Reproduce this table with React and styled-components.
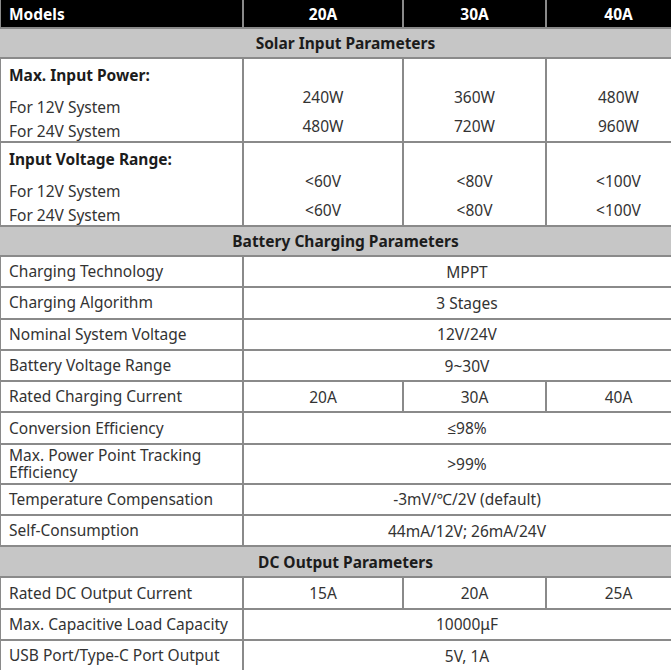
import styled, { createGlobalStyle } from 'styled-components';

const GlobalStyle = createGlobalStyle`
  html, body {
    margin: 0;
    padding: 0;
    background: #ffffff;
    overflow: hidden;
  }
  body {
    font-family: "Noto Sans", "Open Sans", Arial, sans-serif;
  }
`;

const Table = styled.table`
  border-collapse: collapse;
  table-layout: fixed;
  width: 691px;
  margin-left: -1px;
  font-size: 15.5px;
  color: #333333;
`;

const HeadCell = styled.th`
  background: #000000;
  color: #ffffff;
  font-weight: 700;
  font-size: 15.5px;
  height: 27px;
  padding: 0 8px;
  text-align: ${p => (p.left ? 'left' : 'center')};
  border: 2px solid #8a8a8a;
  border-top: none;
  border-bottom: none;
`;

const SectionCell = styled.td`
  background: #c6c6c6;
  color: #1c1c1c;
  font-weight: 700;
  text-align: center;
  height: ${p => p.h || 28}px;
  padding: 0;
  border: 2px solid #8a8a8a;
  border-left: none;
  border-right: none;
`;

const Label = styled.td`
  text-align: left;
  padding: 0 8px;
  height: ${p => p.h || 29.3}px;
  line-height: 17px;
  border: 2px solid #8a8a8a;
  vertical-align: middle;
`;

const Value = styled.td`
  text-align: center;
  padding: 0 6px;
  border: 2px solid #8a8a8a;
  vertical-align: middle;
`;

const GroupLabel = styled.td`
  text-align: left;
  padding: 5px 8px 0;
  height: 77px;
  border: 2px solid #8a8a8a;
  vertical-align: top;
`;

const GroupTitle = styled.div`
  font-weight: 700;
  color: #1c1c1c;
  line-height: 22px;
`;

const GroupLine = styled.div`
  line-height: ${p => p.lh}px;
  margin-top: ${p => p.mt || 0}px;
`;

const GroupValue = styled.td`
  text-align: center;
  border: 2px solid #8a8a8a;
  vertical-align: top;
  padding: 24px 0 0;
  line-height: 29px;
`;

const groups = [
  {
    title: 'Max. Input Power:',
    values: [['240W', '480W'], ['360W', '720W'], ['480W', '960W']],
  },
  {
    title: 'Input Voltage Range:',
    values: [['<60V', '<60V'], ['<80V', '<80V'], ['<100V', '<100V']],
  },
];

const battery = [
  ['Charging Technology', 'MPPT'],
  ['Charging Algorithm', '3 Stages'],
  ['Nominal System Voltage', '12V/24V'],
  ['Battery Voltage Range', '9~30V'],
  ['Rated Charging Current', ['20A', '30A', '40A']],
  ['Conversion Efficiency', '≤98%'],
  ['Max. Power Point Tracking Efficiency', '>99%', 38],
  ['Temperature Compensation', '-3mV/℃/2V (default)'],
  ['Self-Consumption', '44mA/12V; 26mA/24V'],
];

const output = [
  ['Rated DC Output Current', ['15A', '20A', '25A']],
  ['Max. Capacitive Load Capacity', '10000μF'],
  ['USB Port/Type-C Port Output', '5V, 1A'],
];

const SpecRow = ({ label, value, h }) => (
  <tr>
    <Label h={h}>{label}</Label>
    {Array.isArray(value) ? (
      value.map(v => <Value key={v}>{v}</Value>)
    ) : (
      <Value colSpan={3}>{value}</Value>
    )}
  </tr>
);

const App = () => (
  <>
    <GlobalStyle />
    <Table>
      <colgroup>
        <col style={{ width: 243 }} />
        <col style={{ width: 160 }} />
        <col style={{ width: 143 }} />
        <col style={{ width: 145 }} />
      </colgroup>
      <thead>
        <tr>
          <HeadCell left>Models</HeadCell>
          <HeadCell>20A</HeadCell>
          <HeadCell>30A</HeadCell>
          <HeadCell>40A</HeadCell>
        </tr>
      </thead>
      <tbody>
        <tr>
          <SectionCell colSpan={4}>Solar Input Parameters</SectionCell>
        </tr>
        {groups.map(g => (
          <tr key={g.title}>
            <GroupLabel>
              <GroupTitle>{g.title}</GroupTitle>
              <GroupLine lh={28} mt={7}>For 12V System</GroupLine>
              <GroupLine lh={20}>For 24V System</GroupLine>
            </GroupLabel>
            {g.values.map((v, i) => (
              <GroupValue key={i}>
                {v[0]}
                <br />
                {v[1]}
              </GroupValue>
            ))}
          </tr>
        ))}
        <tr>
          <SectionCell colSpan={4}>Battery Charging Parameters</SectionCell>
        </tr>
        {battery.map(([label, value, h]) => (
          <SpecRow key={label} label={label} value={value} h={h} />
        ))}
        <tr>
          <SectionCell colSpan={4} h={29}>DC Output Parameters</SectionCell>
        </tr>
        {output.map(([label, value]) => (
          <SpecRow key={label} label={label} value={value} />
        ))}
      </tbody>
    </Table>
  </>
);

export default App;
